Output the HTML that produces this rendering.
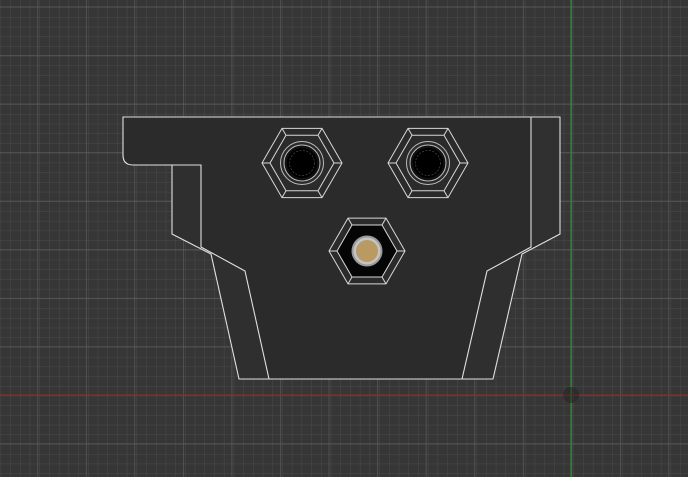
<!DOCTYPE html>
<html><head><meta charset="utf-8"><style>
html,body{margin:0;padding:0;background:#363636;}
svg{display:block}
</style></head><body>
<svg width="688" height="477" viewBox="0 0 688 477" xmlns="http://www.w3.org/2000/svg">
<defs>
<pattern id="minor" width="9.71" height="9.71" patternUnits="userSpaceOnUse" x="0.6" y="7.3">
<path d="M0 0H9.71M0 0V9.71" stroke="#4a4a4a" stroke-width="1" fill="none"/>
</pattern>
<pattern id="major" width="48.55" height="48.55" patternUnits="userSpaceOnUse" x="37.4" y="6.6">
<path d="M0 0H48.55M0 0V48.55" stroke="#606060" stroke-width="1.2" fill="none"/>
</pattern>
<g id="hexA">
<polygon points="-40,0 -20,-34.6 20,-34.6 40,0 20,34.6 -20,34.6" fill="none" stroke="#d8d8d8" stroke-width="1"/>
<polygon points="-32,0 -16,-27.7 16,-27.7 32,0 16,27.7 -16,27.7" fill="none" stroke="#d8d8d8" stroke-width="1"/>
<path d="M-40 0H-32M40 0H32M-20 -34.6L-16 -27.7M20 -34.6L16 -27.7M-20 34.6L-16 27.7M20 34.6L16 27.7" stroke="#d8d8d8" stroke-width="1"/>
<circle r="21.5" fill="none" stroke="#bdbdbd" stroke-width="1"/>
<circle r="18" fill="#101010" stroke="#bdbdbd" stroke-width="1"/>
<circle r="15" fill="#000"/>
<circle r="12.5" fill="none" stroke="#555" stroke-width="0.6" stroke-dasharray="2 1.5"/>
</g>
</defs>
<rect width="688" height="477" fill="#363636"/>
<rect width="688" height="477" fill="url(#minor)"/>
<rect width="688" height="477" fill="url(#major)"/>
<line x1="0" y1="395" x2="688" y2="395" stroke="#8a2a2a" stroke-width="1.2"/>
<line x1="571" y1="0" x2="571" y2="477" stroke="#2e8a2e" stroke-width="1.2"/>
<circle cx="571" cy="395" r="8" fill="#222" opacity="0.5"/>
<path d="M123 117 H560 V234 L522 254 L493 379 H239 L211 254 L172 234 V165 H133 Q123 165 123 155 Z" fill="#2b2b2b"/>
<path d="M531 117 H560 V234 L531 247 Z" fill="#303030"/>
<path d="M522 254 L487 271 L462 379 H493 Z" fill="#2f2f2f"/>
<path d="M211 254 L245 271 L269 379 H239 Z" fill="#2f2f2f"/>
<path d="M172 165 H201 V247 L172 234 Z" fill="#2f2f2f"/>
<g fill="none" stroke="#e0e0e0" stroke-width="1.1">
<path d="M123 117 H560 V234 L522 254 L493 379 H239 L211 254 L172 234 V165 H133 Q123 165 123 155 Z"/>
<path d="M531 117 V247 L487 271 L462 379"/>
<path d="M172 165 H201 V247 L245 271 L269 379"/>
</g>
<use href="#hexA" x="302" y="163"/>
<use href="#hexA" x="428" y="163"/>
<g transform="translate(367,251)">
<polygon points="-30,0 -15,-26 15,-26 30,0 15,26 -15,26" fill="#050505"/>
<polygon points="-38,0 -19,-32.9 19,-32.9 38,0 19,32.9 -19,32.9" fill="none" stroke="#d8d8d8" stroke-width="1"/>
<polygon points="-30,0 -15,-26 15,-26 30,0 15,26 -15,26" fill="none" stroke="#d8d8d8" stroke-width="1"/>
<path d="M-38 0H-30M38 0H30M-19 -32.9L-15 -26M19 -32.9L15 -26M-19 32.9L-15 26M19 32.9L15 26" stroke="#d8d8d8" stroke-width="1"/>
<circle r="15.5" fill="#9a9a9a"/>
<circle r="13.5" fill="#c4c4c4"/>
<circle r="11" fill="#b89a62"/>
</g>
</svg>
</body></html>
